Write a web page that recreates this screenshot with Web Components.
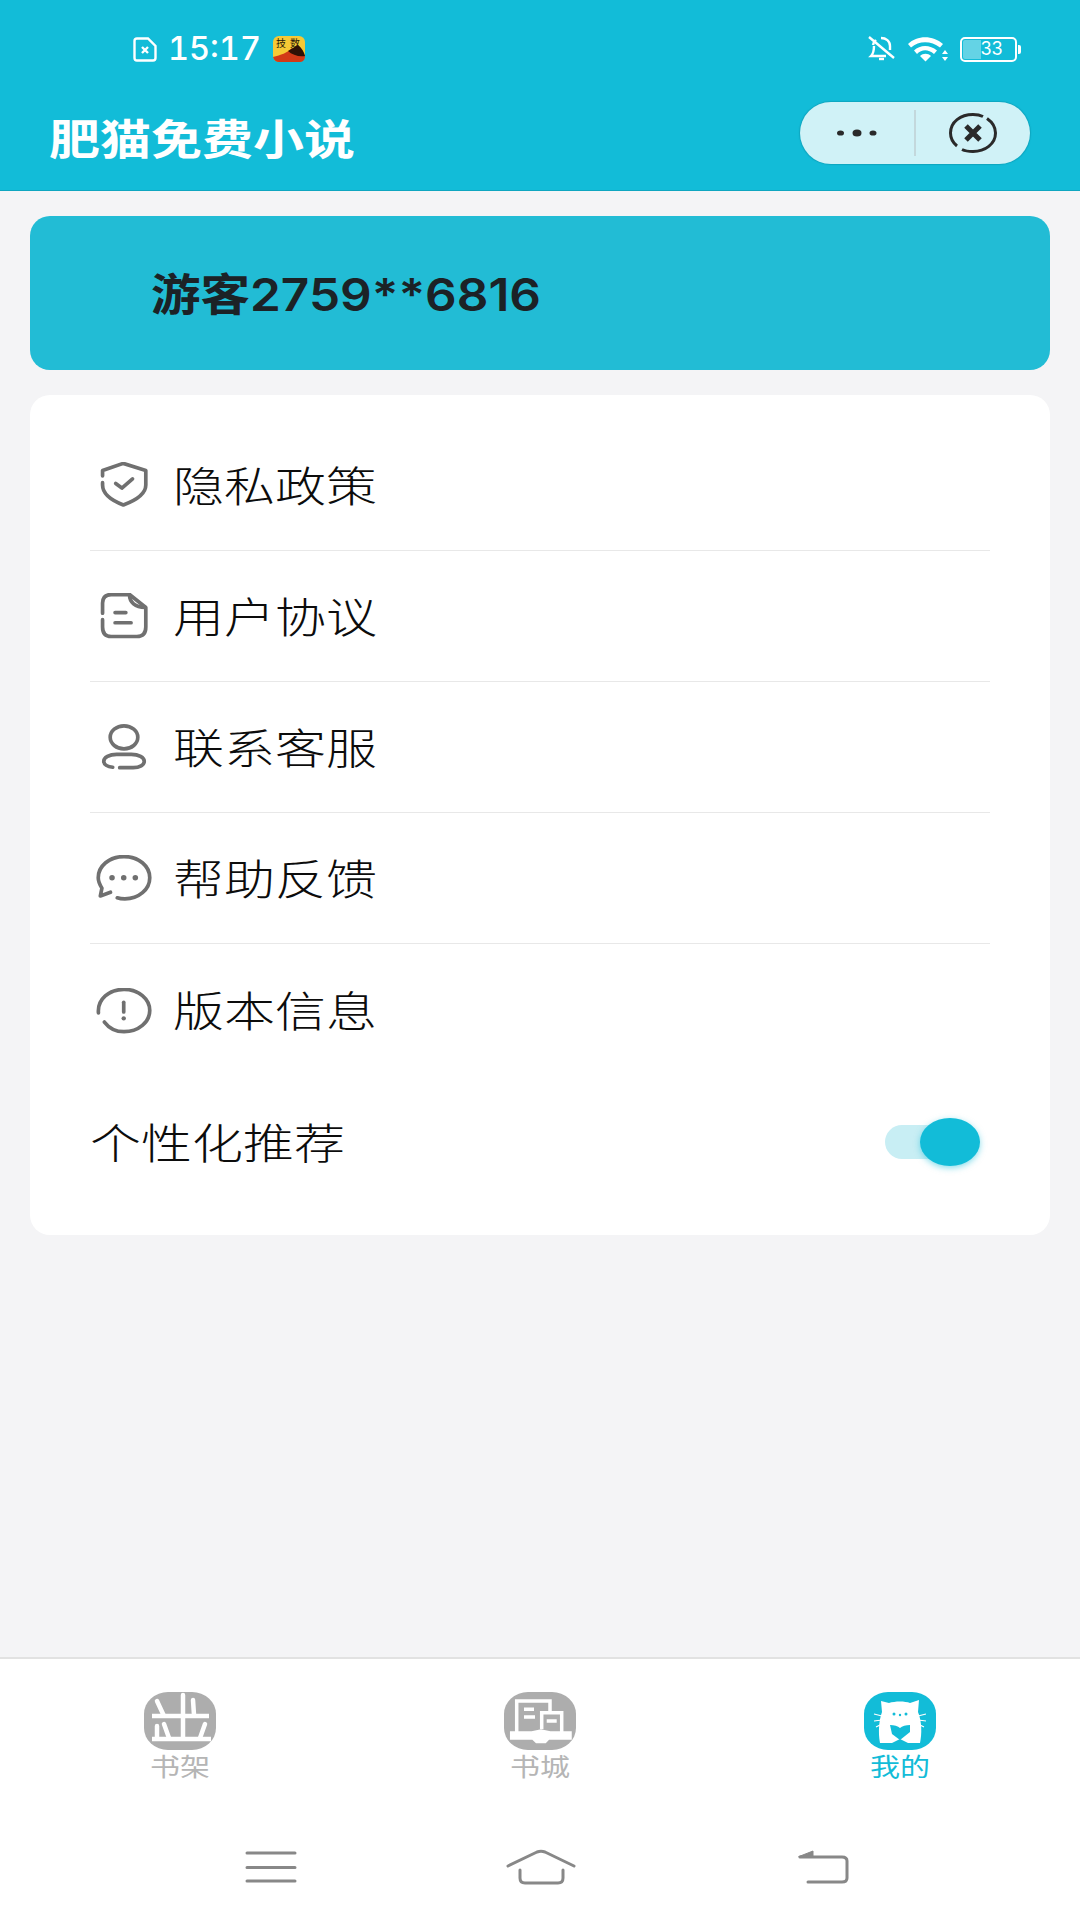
<!DOCTYPE html>
<html lang="zh">
<head>
<meta charset="utf-8">
<title>肥猫免费小说</title>
<style>
    html, body { margin: 0; padding: 0; }
    body { width: 1080px; height: 1920px; background: #f4f4f6; font-family: "Noto Sans CJK SC", "Noto Sans", sans-serif; overflow: hidden; }
</style>
</head>
<body>
<my-app>
    <title-header slot="header" title-text="肥猫免费小说"></title-header>
    <user-card>游客2759**6816</user-card>
    <menu-card>
        <menu-row icon="shield">隐私政策</menu-row>
        <menu-row icon="doc">用户协议</menu-row>
        <menu-row icon="person">联系客服</menu-row>
        <menu-row icon="chat">帮助反馈</menu-row>
        <menu-row icon="info" last>版本信息</menu-row>
        <toggle-row>个性化推荐</toggle-row>
    </menu-card>
    <tab-bar slot="footer"></tab-bar>
    <nav-bar slot="footer"></nav-bar>
</my-app>

<script>
const GREY = "#707070";
const TEAL = "#12bcd8";

const ROW_ICONS = {
    shield: `
        <path d="M6.7 15V9.3L29.3 1.5 53.7 9.3V25C53.7 35 42 42 29.3 46.7 17 42 6.7 35 6.7 25V22.5"/>
        <path d="M21 23.3 27.7 28.3 39.3 18.3"/>`,
    doc: `
        <path d="M6.7 22V11C6.7 5 10 1.7 16 1.7H36L53.7 15.7V37C53.7 44 50 47.3 44 47.3H16C10 47.3 6.7 44 6.7 37V29"/>
        <path d="M36 2C36 10 42 15.7 53 15.7"/>
        <path d="M20.3 21.3H32M20.3 32.3H37.7"/>`,
    person: `
        <ellipse cx="30" cy="14.5" rx="15" ry="12.5"/>
        <path d="M25.3 47.5H40C47 47.5 52 44.5 52 40.5 52 36.5 46 33 38 33H22C14 33 8 36.5 8 40.5 8 44 12 46.5 17.7 47"/>`,
    chat: `
        <path d="M22.7 46.5C26 47.7 30 47.7 31 47.7 46 47.7 58 37.5 58 24.7 58 12 46 1.7 30 1.7 14 1.7 2 12 2 24.7 2 29 3.5 32 6 36L4.3 44.5 15.3 40.5"/>
        <circle cx="17" cy="24.7" r="3" fill="${GREY}" stroke="none"/>
        <circle cx="29.7" cy="24.7" r="3" fill="${GREY}" stroke="none"/>
        <circle cx="42.3" cy="24.7" r="3" fill="${GREY}" stroke="none"/>`,
    info: `
        <path d="M2.2 27C1 12 14 1.5 30 1.5 46 1.5 58 12 58 24.5 58 37 46 47.5 30 47.5 21 47.5 14 44 8.7 37"/>
        <path d="M29.7 15.5V26"/>
        <circle cx="29.7" cy="33" r="2.4" fill="${GREY}" stroke="none"/>`
};

const TAB_ICONS = {
    shelf: `
        <rect width="72" height="58" rx="24" ry="22" fill="#adadad"/>
        <g stroke="#fff" stroke-width="4.5" fill="none" stroke-linecap="round">
            <path d="M8 24H65M8 47H67" stroke-linecap="butt"/>
            <path d="M39 3V46M49 8 50 23"/>
            <path d="M13 9 19.5 23M13 34V46M20 32 25 46M61 32 56 46"/>
        </g>`,
    store: `
        <rect width="72" height="58" rx="24" ry="22" fill="#adadad"/>
        <g stroke="#fff" stroke-width="3.5" fill="none">
            <path d="M12.7 40V9H46V19"/>
            <path d="M37.7 37V20.7H57.7V40"/>
            <path d="M20 17.3H30M20 25H31M42.7 29H52.7"/>
            <path d="M7.7 41V46H29L32.7 49.5H41L44.3 46H66V41H46L37 39 28 41Z" fill="#fff"/>
        </g>`,
    cat: `
        <rect width="72" height="58" rx="24" ry="22" fill="${TEAL}"/>
        <path d="M16 51C14 40 15 28 18 20L17 9 25 11C31 9 41 9 46 11L55 8 54 20C58 30 58 42 56 51L44 51 36 47 28 51Z" fill="#fff"/>
        <path d="M26 33C30 33 34 34 36 36 38 34 42 33 46 33V40L36 48 28 42Z" fill="${TEAL}"/>
        <circle cx="30" cy="22" r="1.5" fill="${TEAL}"/>
        <circle cx="42" cy="22" r="1.5" fill="${TEAL}"/>
        <circle cx="36" cy="23" r="1.2" fill="${TEAL}"/>
        <path d="M10 22 18 24M10 29 18 28M12 35 18 32M62 22 54 24M62 29 54 28M60 35 54 32" stroke="#fff" stroke-width="1.2" fill="none"/>`
};

class MyApp extends HTMLElement {
    constructor() {
        super();
        this.attachShadow({ mode: "open" });
        this.shadowRoot.innerHTML = `
            <style>
                :host { display: flex; flex-direction: column; width: 1080px; height: 1920px; }
                main { flex: 1; display: flex; flex-direction: column; gap: 25px; padding: 25px 30px 0; }
                footer { background: #fff; }
            </style>
            <slot name="header"></slot>
            <main><slot></slot></main>
            <footer><slot name="footer"></slot></footer>
        `;
    }
}

class StatusBar extends HTMLElement {
    constructor() {
        super();
        this.attachShadow({ mode: "open" });
        this.shadowRoot.innerHTML = `
            <style>
                :host { display: flex; align-items: center; height: 98px; padding: 0 60px 0 133px; box-sizing: border-box; color: #fff; }
                svg { display: block; }
                .time { font: 500 32.5px/1 Inter, sans-serif; font-variant-numeric: tabular-nums; margin: 0 12px 0 11px; }
                .right { margin-left: auto; display: flex; align-items: center; gap: 12px; }
                .battery { position: relative; width: 53px; height: 21px; border: 2.5px solid #fff; border-radius: 5px; display: flex; align-items: center; justify-content: center; font: 400 18px/1 Inter, sans-serif; }
                .battery::before { content: ""; position: absolute; left: 1px; top: 1px; bottom: 1px; width: 18px; background: rgba(255,255,255,.35); border-radius: 2px 0 0 2px; }
                .battery::after { content: ""; position: absolute; right: -6px; top: 6px; width: 3px; height: 9px; background: #fff; border-radius: 0 2px 2px 0; }
                .batt-wrap { padding-right: 3px; }
                span.num { position: relative; padding-left: 6px; }
            </style>
            <svg width="24" height="25" viewBox="0 0 24 25" fill="none" stroke="#fff" stroke-width="2.4">
                <path d="M4 1.5H15L22.5 9V21C22.5 22.5 21.5 23.5 20 23.5H4C2.5 23.5 1.5 22.5 1.5 21V4C1.5 2.5 2.5 1.5 4 1.5Z"/>
                <path d="M9 10 15 16M15 10 9 16"/>
            </svg>
            <span class="time">15:17</span>
            <svg width="32" height="26" viewBox="0 0 32 26">
                <rect width="32" height="26" rx="6" fill="#f6c935"/>
                <text x="3" y="11" font-size="10" letter-spacing="4" font-family="Noto Sans CJK SC" fill="#2a1a0a">技数</text>
                <path d="M0 21C8 19 14 17 19 12 23 14 27 16 32 19V20C32 24 30 26 26 26H6C3 26 1 24.5 0 21Z" fill="#d23a17"/>
                <path d="M15 15C19 13 22 10 25 9 29 12 31 16 32 20 26 21 19 19 15 15Z" fill="#2f1206"/>
            </svg>
            <div class="right">
                <svg width="28" height="26" viewBox="0 0 28 26" fill="none" stroke="#fff" stroke-width="2.4">
                    <path d="M1 1 26 22"/>
                    <path d="M5 9C5.5 6 7 5 8 4M13 2C18 2 22 5 22 10V14M18 20H3C6 17 6 13 6 10"/>
                    <path d="M11 23H16"/>
                </svg>
                <svg width="40" height="26" viewBox="0 0 40 26" fill="#fff">
                    <path d="M0 8C9 -1 25 -1 35 8L32 11.5C23 4.5 11 4.5 3 11.5Z"/>
                    <path d="M6 14.5C12 8.5 22 8.5 29 14.5L26 18C20 13 14 13 9 18Z"/>
                    <path d="M12 20C15 17 20 17 23 20L17.5 25.5Z"/>
                    <path d="M37 14 40 18H34ZM37 25 40 21H34Z"/>
                </svg>
                <div class="batt-wrap"><div class="battery"><span class="num">33</span></div></div>
            </div>
        `;
    }
}

class TitleHeader extends HTMLElement {
    constructor() {
        super();
        this.attachShadow({ mode: "open" });
        this.shadowRoot.innerHTML = `
            <style>
                :host { display: block; background: ${TEAL}; height: 191px; border-bottom: 1px solid #0fa6c0; box-sizing: border-box; }
                .bar { display: flex; justify-content: space-between; align-items: flex-start; padding: 0 50px 0 49px; }
                h1 { margin: 15px 0 0; font: 700 51px/49px "Noto Sans CJK SC", sans-serif; color: #fff; transform: scaleY(.82); }
                .capsule { display: flex; align-items: center; width: 230px; height: 62px; margin-top: 4px; background: #d0f2f7; border-radius: 31px; box-shadow: 0 0 1px 1px rgba(0,100,120,.25); }
                .half { flex: 1; display: flex; justify-content: center; }
                .sep { width: 2px; height: 46px; background: #c3d8dc; }
                svg { display: block; }
            </style>
            <status-bar></status-bar>
            <div class="bar">
                <h1>${this.getAttribute("title-text")}</h1>
                <div class="capsule">
                    <div class="half">
                        <svg width="40" height="10" viewBox="0 0 40 10" fill="#2a2a2a">
                            <ellipse cx="3.5" cy="5" rx="3.5" ry="2.6"/>
                            <ellipse cx="20" cy="5" rx="4.5" ry="3.6"/>
                            <ellipse cx="36" cy="5" rx="3.5" ry="2.6"/>
                        </svg>
                    </div>
                    <div class="sep"></div>
                    <div class="half">
                        <svg width="48" height="40" viewBox="0 0 48 40" fill="none" stroke="#2a2a2a">
                            <path stroke-width="3" d="M8 33C3 29 1.5 25 1.5 20 1.5 9 11.5 1.5 24 1.5 28 1.5 31 2 34 3.5M38 5.5C43 9 46.5 14 46.5 20 46.5 31 36 38.5 24 38.5 20 38.5 16 38 13 36.5"/>
                            <path stroke-width="5" d="M17 13 31 27M31 13 17 27"/>
                        </svg>
                    </div>
                </div>
            </div>
        `;
    }
}

class UserCard extends HTMLElement {
    constructor() {
        super();
        this.attachShadow({ mode: "open" });
        this.shadowRoot.innerHTML = `
            <style>
                :host { display: flex; align-items: center; height: 154px; padding-left: 121px; background: #22bcd5; border-radius: 20px; color: #1c2226; }
                span { font: 600 49.5px/1 Inter, "Noto Sans CJK SC", sans-serif; transform: scaleY(.9); white-space: nowrap; margin-top: 5px; }
            </style>
            <span><slot></slot></span>
        `;
    }
}

class MenuCard extends HTMLElement {
    constructor() {
        super();
        this.attachShadow({ mode: "open" });
        this.shadowRoot.innerHTML = `
            <style>
                :host { display: block; padding: 25px 60px 26px; background: #fff; border-radius: 20px; }
            </style>
            <slot></slot>
        `;
    }
}

class MenuRow extends HTMLElement {
    constructor() {
        super();
        this.attachShadow({ mode: "open" });
        const icon = ROW_ICONS[this.getAttribute("icon")];
        this.shadowRoot.innerHTML = `
            <style>
                :host { display: flex; align-items: center; gap: 21px; height: 131px; padding-left: 6px; box-sizing: border-box; border-bottom: 1.5px solid #e8e8e8; color: #0c0c0c; }
                :host([last]) { border-bottom: 0; height: 133px; }
                svg { display: block; flex: none; }
                span { font: 300 51px/1 "Noto Sans CJK SC", sans-serif; transform: scaleY(.82); white-space: nowrap; margin-top: -2px; }
            </style>
            <svg width="56" height="46" viewBox="0 0 60 50" fill="none" stroke="${GREY}" stroke-width="4" stroke-linecap="round" stroke-linejoin="round">${icon}</svg>
            <span><slot></slot></span>
        `;
    }
}

class ToggleRow extends HTMLElement {
    constructor() {
        super();
        this.attachShadow({ mode: "open" });
        this.shadowRoot.innerHTML = `
            <style>
                :host { display: flex; align-items: center; justify-content: space-between; height: 132px; padding-right: 29px; color: #0c0c0c; }
                span { font: 300 51px/1 "Noto Sans CJK SC", sans-serif; transform: scaleY(.82); white-space: nowrap; margin-top: -4px; }
                .track { position: relative; width: 76px; height: 34px; margin-top: -2px; background: #c8eef4; border-radius: 17px; }
                .thumb { position: absolute; right: -19px; top: -7px; width: 60px; height: 48px; border-radius: 50%; background: ${TEAL}; box-shadow: 0 2px 6px rgba(18,188,216,.5); }
            </style>
            <span><slot></slot></span>
            <div class="track"><div class="thumb"></div></div>
        `;
    }
}

class TabItem extends HTMLElement {
    constructor() {
        super();
        this.attachShadow({ mode: "open" });
        const icon = TAB_ICONS[this.getAttribute("icon")];
        this.shadowRoot.innerHTML = `
            <style>
                :host { flex: 1; display: flex; flex-direction: column; align-items: center; color: #b5b5b5; }
                :host([active]) { color: ${TEAL}; }
                svg { display: block; }
                span { font: 400 30px/28px "Noto Sans CJK SC", sans-serif; margin-top: 1px; transform: scaleY(.82); }
            </style>
            <svg width="72" height="58" viewBox="0 0 72 58">${icon}</svg>
            <span><slot></slot></span>
        `;
    }
}

class TabBar extends HTMLElement {
    constructor() {
        super();
        this.attachShadow({ mode: "open" });
        this.shadowRoot.innerHTML = `
            <style>
                :host { display: flex; height: 182px; padding-top: 33px; box-sizing: border-box; border-top: 2px solid #e2e2e2; }
            </style>
            <tab-item icon="shelf">书架</tab-item>
            <tab-item icon="store">书城</tab-item>
            <tab-item icon="cat" active>我的</tab-item>
        `;
    }
}

class NavBar extends HTMLElement {
    constructor() {
        super();
        this.attachShadow({ mode: "open" });
        this.shadowRoot.innerHTML = `
            <style>
                :host { display: flex; align-items: center; height: 81px; padding: 0 0 25px 245px; box-sizing: border-box; }
                svg { display: block; }
                .home { margin-left: 208px; }
                .back { margin-left: 220px; }
            </style>
            <svg width="52" height="34" viewBox="0 0 52 34" fill="none" stroke="#888" stroke-width="3" stroke-linecap="round">
                <path d="M2 3H50M2 17.5H50M2 31H50"/>
            </svg>
            <svg class="home" width="72" height="36" viewBox="0 0 72 36" fill="none" stroke="#888" stroke-width="3" stroke-linecap="round" stroke-linejoin="round">
                <path d="M3 17 32 3Q36 1.5 40 3L69 17"/>
                <path d="M15 21V29Q15 34 20 34H53Q58 34 58 29V21"/>
            </svg>
            <svg class="back" width="52" height="34" viewBox="0 0 52 34" fill="none" stroke="#888" stroke-width="3" stroke-linecap="round" stroke-linejoin="round">
                <path d="M3 7H45Q50 7 50 11V28Q50 32 45 32H11"/>
                <path d="M2 6.5 16 1V6.5Z" fill="#888" stroke-width="1"/>
            </svg>
        `;
    }
}

customElements.define("my-app", MyApp);
customElements.define("status-bar", StatusBar);
customElements.define("title-header", TitleHeader);
customElements.define("user-card", UserCard);
customElements.define("menu-card", MenuCard);
customElements.define("menu-row", MenuRow);
customElements.define("toggle-row", ToggleRow);
customElements.define("tab-item", TabItem);
customElements.define("tab-bar", TabBar);
customElements.define("nav-bar", NavBar);
</script>
</body>
</html>
